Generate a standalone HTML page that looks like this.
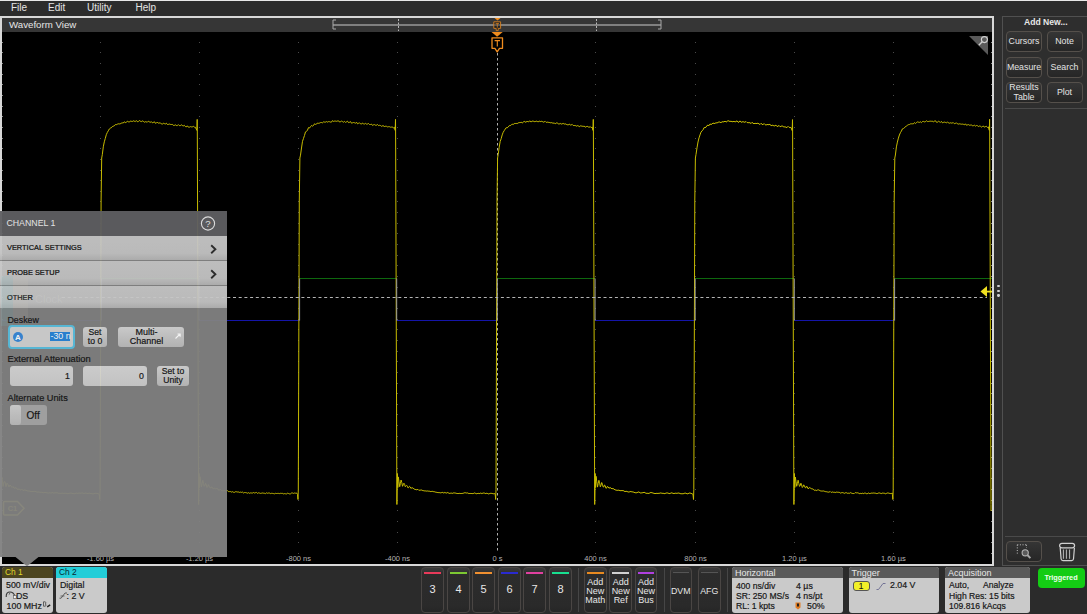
<!DOCTYPE html>
<html><head><meta charset="utf-8">
<style>
*{margin:0;padding:0;box-sizing:border-box}
html,body{width:1087px;height:614px;overflow:hidden;background:#2b2b2b;font-family:"Liberation Sans", sans-serif;}
.a{position:absolute}
.t{position:absolute;white-space:nowrap;line-height:1}
.k{-webkit-text-stroke:0.25px currentColor}
</style></head><body>
<div class="a" style="left:0;top:0;width:1087px;height:1px;background:#e8e8e8"></div><div class="a" style="left:0;top:1px;width:1087px;height:15px;background:#2c2c2c"></div><div class="t" style="left:11.0px;top:3px;font-size:10px;color:#e4e4e4">File</div><div class="t" style="left:48.0px;top:3px;font-size:10px;color:#e4e4e4">Edit</div><div class="t" style="left:87.0px;top:3px;font-size:10px;color:#e4e4e4">Utility</div><div class="t" style="left:135.5px;top:3px;font-size:10px;color:#e4e4e4">Help</div><div class="a" style="left:0;top:16px;width:994px;height:550px;background:#d8d8d8"></div><div class="a" style="left:2px;top:18px;width:990px;height:14px;background:#363636"></div><div class="t" style="left:9px;top:19.8px;font-size:9.7px;color:#e6e6e6">Waveform View</div><svg class="a" style="left:2px;top:32px" width="990" height="532" viewBox="2 32 990 532"><rect x="2" y="32" width="990" height="532" fill="#000"/><g fill="#4a4a4a"><rect x="100" y="42" width="1" height="1"/><rect x="100" y="52" width="1" height="1"/><rect x="100" y="63" width="1" height="1"/><rect x="100" y="74" width="1" height="1"/><rect x="100" y="84" width="1" height="1"/><rect x="100" y="95" width="1" height="1"/><rect x="100" y="106" width="1" height="1"/><rect x="100" y="116" width="1" height="1"/><rect x="100" y="127" width="1" height="1"/><rect x="100" y="138" width="1" height="1"/><rect x="100" y="148" width="1" height="1"/><rect x="100" y="159" width="1" height="1"/><rect x="100" y="170" width="1" height="1"/><rect x="100" y="180" width="1" height="1"/><rect x="100" y="191" width="1" height="1"/><rect x="100" y="201" width="1" height="1"/><rect x="100" y="212" width="1" height="1"/><rect x="100" y="223" width="1" height="1"/><rect x="100" y="233" width="1" height="1"/><rect x="100" y="244" width="1" height="1"/><rect x="100" y="255" width="1" height="1"/><rect x="100" y="265" width="1" height="1"/><rect x="100" y="276" width="1" height="1"/><rect x="100" y="287" width="1" height="1"/><rect x="100" y="297" width="1" height="1"/><rect x="100" y="308" width="1" height="1"/><rect x="100" y="319" width="1" height="1"/><rect x="100" y="329" width="1" height="1"/><rect x="100" y="340" width="1" height="1"/><rect x="100" y="351" width="1" height="1"/><rect x="100" y="361" width="1" height="1"/><rect x="100" y="372" width="1" height="1"/><rect x="100" y="383" width="1" height="1"/><rect x="100" y="393" width="1" height="1"/><rect x="100" y="404" width="1" height="1"/><rect x="100" y="414" width="1" height="1"/><rect x="100" y="425" width="1" height="1"/><rect x="100" y="436" width="1" height="1"/><rect x="100" y="446" width="1" height="1"/><rect x="100" y="457" width="1" height="1"/><rect x="100" y="468" width="1" height="1"/><rect x="100" y="478" width="1" height="1"/><rect x="100" y="489" width="1" height="1"/><rect x="100" y="500" width="1" height="1"/><rect x="100" y="510" width="1" height="1"/><rect x="100" y="521" width="1" height="1"/><rect x="100" y="532" width="1" height="1"/><rect x="100" y="542" width="1" height="1"/><rect x="100" y="553" width="1" height="1"/><rect x="199" y="42" width="1" height="1"/><rect x="199" y="52" width="1" height="1"/><rect x="199" y="63" width="1" height="1"/><rect x="199" y="74" width="1" height="1"/><rect x="199" y="84" width="1" height="1"/><rect x="199" y="95" width="1" height="1"/><rect x="199" y="106" width="1" height="1"/><rect x="199" y="116" width="1" height="1"/><rect x="199" y="127" width="1" height="1"/><rect x="199" y="138" width="1" height="1"/><rect x="199" y="148" width="1" height="1"/><rect x="199" y="159" width="1" height="1"/><rect x="199" y="170" width="1" height="1"/><rect x="199" y="180" width="1" height="1"/><rect x="199" y="191" width="1" height="1"/><rect x="199" y="201" width="1" height="1"/><rect x="199" y="212" width="1" height="1"/><rect x="199" y="223" width="1" height="1"/><rect x="199" y="233" width="1" height="1"/><rect x="199" y="244" width="1" height="1"/><rect x="199" y="255" width="1" height="1"/><rect x="199" y="265" width="1" height="1"/><rect x="199" y="276" width="1" height="1"/><rect x="199" y="287" width="1" height="1"/><rect x="199" y="297" width="1" height="1"/><rect x="199" y="308" width="1" height="1"/><rect x="199" y="319" width="1" height="1"/><rect x="199" y="329" width="1" height="1"/><rect x="199" y="340" width="1" height="1"/><rect x="199" y="351" width="1" height="1"/><rect x="199" y="361" width="1" height="1"/><rect x="199" y="372" width="1" height="1"/><rect x="199" y="383" width="1" height="1"/><rect x="199" y="393" width="1" height="1"/><rect x="199" y="404" width="1" height="1"/><rect x="199" y="414" width="1" height="1"/><rect x="199" y="425" width="1" height="1"/><rect x="199" y="436" width="1" height="1"/><rect x="199" y="446" width="1" height="1"/><rect x="199" y="457" width="1" height="1"/><rect x="199" y="468" width="1" height="1"/><rect x="199" y="478" width="1" height="1"/><rect x="199" y="489" width="1" height="1"/><rect x="199" y="500" width="1" height="1"/><rect x="199" y="510" width="1" height="1"/><rect x="199" y="521" width="1" height="1"/><rect x="199" y="532" width="1" height="1"/><rect x="199" y="542" width="1" height="1"/><rect x="199" y="553" width="1" height="1"/><rect x="298" y="42" width="1" height="1"/><rect x="298" y="52" width="1" height="1"/><rect x="298" y="63" width="1" height="1"/><rect x="298" y="74" width="1" height="1"/><rect x="298" y="84" width="1" height="1"/><rect x="298" y="95" width="1" height="1"/><rect x="298" y="106" width="1" height="1"/><rect x="298" y="116" width="1" height="1"/><rect x="298" y="127" width="1" height="1"/><rect x="298" y="138" width="1" height="1"/><rect x="298" y="148" width="1" height="1"/><rect x="298" y="159" width="1" height="1"/><rect x="298" y="170" width="1" height="1"/><rect x="298" y="180" width="1" height="1"/><rect x="298" y="191" width="1" height="1"/><rect x="298" y="201" width="1" height="1"/><rect x="298" y="212" width="1" height="1"/><rect x="298" y="223" width="1" height="1"/><rect x="298" y="233" width="1" height="1"/><rect x="298" y="244" width="1" height="1"/><rect x="298" y="255" width="1" height="1"/><rect x="298" y="265" width="1" height="1"/><rect x="298" y="276" width="1" height="1"/><rect x="298" y="287" width="1" height="1"/><rect x="298" y="297" width="1" height="1"/><rect x="298" y="308" width="1" height="1"/><rect x="298" y="319" width="1" height="1"/><rect x="298" y="329" width="1" height="1"/><rect x="298" y="340" width="1" height="1"/><rect x="298" y="351" width="1" height="1"/><rect x="298" y="361" width="1" height="1"/><rect x="298" y="372" width="1" height="1"/><rect x="298" y="383" width="1" height="1"/><rect x="298" y="393" width="1" height="1"/><rect x="298" y="404" width="1" height="1"/><rect x="298" y="414" width="1" height="1"/><rect x="298" y="425" width="1" height="1"/><rect x="298" y="436" width="1" height="1"/><rect x="298" y="446" width="1" height="1"/><rect x="298" y="457" width="1" height="1"/><rect x="298" y="468" width="1" height="1"/><rect x="298" y="478" width="1" height="1"/><rect x="298" y="489" width="1" height="1"/><rect x="298" y="500" width="1" height="1"/><rect x="298" y="510" width="1" height="1"/><rect x="298" y="521" width="1" height="1"/><rect x="298" y="532" width="1" height="1"/><rect x="298" y="542" width="1" height="1"/><rect x="298" y="553" width="1" height="1"/><rect x="397" y="42" width="1" height="1"/><rect x="397" y="52" width="1" height="1"/><rect x="397" y="63" width="1" height="1"/><rect x="397" y="74" width="1" height="1"/><rect x="397" y="84" width="1" height="1"/><rect x="397" y="95" width="1" height="1"/><rect x="397" y="106" width="1" height="1"/><rect x="397" y="116" width="1" height="1"/><rect x="397" y="127" width="1" height="1"/><rect x="397" y="138" width="1" height="1"/><rect x="397" y="148" width="1" height="1"/><rect x="397" y="159" width="1" height="1"/><rect x="397" y="170" width="1" height="1"/><rect x="397" y="180" width="1" height="1"/><rect x="397" y="191" width="1" height="1"/><rect x="397" y="201" width="1" height="1"/><rect x="397" y="212" width="1" height="1"/><rect x="397" y="223" width="1" height="1"/><rect x="397" y="233" width="1" height="1"/><rect x="397" y="244" width="1" height="1"/><rect x="397" y="255" width="1" height="1"/><rect x="397" y="265" width="1" height="1"/><rect x="397" y="276" width="1" height="1"/><rect x="397" y="287" width="1" height="1"/><rect x="397" y="297" width="1" height="1"/><rect x="397" y="308" width="1" height="1"/><rect x="397" y="319" width="1" height="1"/><rect x="397" y="329" width="1" height="1"/><rect x="397" y="340" width="1" height="1"/><rect x="397" y="351" width="1" height="1"/><rect x="397" y="361" width="1" height="1"/><rect x="397" y="372" width="1" height="1"/><rect x="397" y="383" width="1" height="1"/><rect x="397" y="393" width="1" height="1"/><rect x="397" y="404" width="1" height="1"/><rect x="397" y="414" width="1" height="1"/><rect x="397" y="425" width="1" height="1"/><rect x="397" y="436" width="1" height="1"/><rect x="397" y="446" width="1" height="1"/><rect x="397" y="457" width="1" height="1"/><rect x="397" y="468" width="1" height="1"/><rect x="397" y="478" width="1" height="1"/><rect x="397" y="489" width="1" height="1"/><rect x="397" y="500" width="1" height="1"/><rect x="397" y="510" width="1" height="1"/><rect x="397" y="521" width="1" height="1"/><rect x="397" y="532" width="1" height="1"/><rect x="397" y="542" width="1" height="1"/><rect x="397" y="553" width="1" height="1"/><rect x="595" y="42" width="1" height="1"/><rect x="595" y="52" width="1" height="1"/><rect x="595" y="63" width="1" height="1"/><rect x="595" y="74" width="1" height="1"/><rect x="595" y="84" width="1" height="1"/><rect x="595" y="95" width="1" height="1"/><rect x="595" y="106" width="1" height="1"/><rect x="595" y="116" width="1" height="1"/><rect x="595" y="127" width="1" height="1"/><rect x="595" y="138" width="1" height="1"/><rect x="595" y="148" width="1" height="1"/><rect x="595" y="159" width="1" height="1"/><rect x="595" y="170" width="1" height="1"/><rect x="595" y="180" width="1" height="1"/><rect x="595" y="191" width="1" height="1"/><rect x="595" y="201" width="1" height="1"/><rect x="595" y="212" width="1" height="1"/><rect x="595" y="223" width="1" height="1"/><rect x="595" y="233" width="1" height="1"/><rect x="595" y="244" width="1" height="1"/><rect x="595" y="255" width="1" height="1"/><rect x="595" y="265" width="1" height="1"/><rect x="595" y="276" width="1" height="1"/><rect x="595" y="287" width="1" height="1"/><rect x="595" y="297" width="1" height="1"/><rect x="595" y="308" width="1" height="1"/><rect x="595" y="319" width="1" height="1"/><rect x="595" y="329" width="1" height="1"/><rect x="595" y="340" width="1" height="1"/><rect x="595" y="351" width="1" height="1"/><rect x="595" y="361" width="1" height="1"/><rect x="595" y="372" width="1" height="1"/><rect x="595" y="383" width="1" height="1"/><rect x="595" y="393" width="1" height="1"/><rect x="595" y="404" width="1" height="1"/><rect x="595" y="414" width="1" height="1"/><rect x="595" y="425" width="1" height="1"/><rect x="595" y="436" width="1" height="1"/><rect x="595" y="446" width="1" height="1"/><rect x="595" y="457" width="1" height="1"/><rect x="595" y="468" width="1" height="1"/><rect x="595" y="478" width="1" height="1"/><rect x="595" y="489" width="1" height="1"/><rect x="595" y="500" width="1" height="1"/><rect x="595" y="510" width="1" height="1"/><rect x="595" y="521" width="1" height="1"/><rect x="595" y="532" width="1" height="1"/><rect x="595" y="542" width="1" height="1"/><rect x="595" y="553" width="1" height="1"/><rect x="695" y="42" width="1" height="1"/><rect x="695" y="52" width="1" height="1"/><rect x="695" y="63" width="1" height="1"/><rect x="695" y="74" width="1" height="1"/><rect x="695" y="84" width="1" height="1"/><rect x="695" y="95" width="1" height="1"/><rect x="695" y="106" width="1" height="1"/><rect x="695" y="116" width="1" height="1"/><rect x="695" y="127" width="1" height="1"/><rect x="695" y="138" width="1" height="1"/><rect x="695" y="148" width="1" height="1"/><rect x="695" y="159" width="1" height="1"/><rect x="695" y="170" width="1" height="1"/><rect x="695" y="180" width="1" height="1"/><rect x="695" y="191" width="1" height="1"/><rect x="695" y="201" width="1" height="1"/><rect x="695" y="212" width="1" height="1"/><rect x="695" y="223" width="1" height="1"/><rect x="695" y="233" width="1" height="1"/><rect x="695" y="244" width="1" height="1"/><rect x="695" y="255" width="1" height="1"/><rect x="695" y="265" width="1" height="1"/><rect x="695" y="276" width="1" height="1"/><rect x="695" y="287" width="1" height="1"/><rect x="695" y="297" width="1" height="1"/><rect x="695" y="308" width="1" height="1"/><rect x="695" y="319" width="1" height="1"/><rect x="695" y="329" width="1" height="1"/><rect x="695" y="340" width="1" height="1"/><rect x="695" y="351" width="1" height="1"/><rect x="695" y="361" width="1" height="1"/><rect x="695" y="372" width="1" height="1"/><rect x="695" y="383" width="1" height="1"/><rect x="695" y="393" width="1" height="1"/><rect x="695" y="404" width="1" height="1"/><rect x="695" y="414" width="1" height="1"/><rect x="695" y="425" width="1" height="1"/><rect x="695" y="436" width="1" height="1"/><rect x="695" y="446" width="1" height="1"/><rect x="695" y="457" width="1" height="1"/><rect x="695" y="468" width="1" height="1"/><rect x="695" y="478" width="1" height="1"/><rect x="695" y="489" width="1" height="1"/><rect x="695" y="500" width="1" height="1"/><rect x="695" y="510" width="1" height="1"/><rect x="695" y="521" width="1" height="1"/><rect x="695" y="532" width="1" height="1"/><rect x="695" y="542" width="1" height="1"/><rect x="695" y="553" width="1" height="1"/><rect x="794" y="42" width="1" height="1"/><rect x="794" y="52" width="1" height="1"/><rect x="794" y="63" width="1" height="1"/><rect x="794" y="74" width="1" height="1"/><rect x="794" y="84" width="1" height="1"/><rect x="794" y="95" width="1" height="1"/><rect x="794" y="106" width="1" height="1"/><rect x="794" y="116" width="1" height="1"/><rect x="794" y="127" width="1" height="1"/><rect x="794" y="138" width="1" height="1"/><rect x="794" y="148" width="1" height="1"/><rect x="794" y="159" width="1" height="1"/><rect x="794" y="170" width="1" height="1"/><rect x="794" y="180" width="1" height="1"/><rect x="794" y="191" width="1" height="1"/><rect x="794" y="201" width="1" height="1"/><rect x="794" y="212" width="1" height="1"/><rect x="794" y="223" width="1" height="1"/><rect x="794" y="233" width="1" height="1"/><rect x="794" y="244" width="1" height="1"/><rect x="794" y="255" width="1" height="1"/><rect x="794" y="265" width="1" height="1"/><rect x="794" y="276" width="1" height="1"/><rect x="794" y="287" width="1" height="1"/><rect x="794" y="297" width="1" height="1"/><rect x="794" y="308" width="1" height="1"/><rect x="794" y="319" width="1" height="1"/><rect x="794" y="329" width="1" height="1"/><rect x="794" y="340" width="1" height="1"/><rect x="794" y="351" width="1" height="1"/><rect x="794" y="361" width="1" height="1"/><rect x="794" y="372" width="1" height="1"/><rect x="794" y="383" width="1" height="1"/><rect x="794" y="393" width="1" height="1"/><rect x="794" y="404" width="1" height="1"/><rect x="794" y="414" width="1" height="1"/><rect x="794" y="425" width="1" height="1"/><rect x="794" y="436" width="1" height="1"/><rect x="794" y="446" width="1" height="1"/><rect x="794" y="457" width="1" height="1"/><rect x="794" y="468" width="1" height="1"/><rect x="794" y="478" width="1" height="1"/><rect x="794" y="489" width="1" height="1"/><rect x="794" y="500" width="1" height="1"/><rect x="794" y="510" width="1" height="1"/><rect x="794" y="521" width="1" height="1"/><rect x="794" y="532" width="1" height="1"/><rect x="794" y="542" width="1" height="1"/><rect x="794" y="553" width="1" height="1"/><rect x="893" y="42" width="1" height="1"/><rect x="893" y="52" width="1" height="1"/><rect x="893" y="63" width="1" height="1"/><rect x="893" y="74" width="1" height="1"/><rect x="893" y="84" width="1" height="1"/><rect x="893" y="95" width="1" height="1"/><rect x="893" y="106" width="1" height="1"/><rect x="893" y="116" width="1" height="1"/><rect x="893" y="127" width="1" height="1"/><rect x="893" y="138" width="1" height="1"/><rect x="893" y="148" width="1" height="1"/><rect x="893" y="159" width="1" height="1"/><rect x="893" y="170" width="1" height="1"/><rect x="893" y="180" width="1" height="1"/><rect x="893" y="191" width="1" height="1"/><rect x="893" y="201" width="1" height="1"/><rect x="893" y="212" width="1" height="1"/><rect x="893" y="223" width="1" height="1"/><rect x="893" y="233" width="1" height="1"/><rect x="893" y="244" width="1" height="1"/><rect x="893" y="255" width="1" height="1"/><rect x="893" y="265" width="1" height="1"/><rect x="893" y="276" width="1" height="1"/><rect x="893" y="287" width="1" height="1"/><rect x="893" y="297" width="1" height="1"/><rect x="893" y="308" width="1" height="1"/><rect x="893" y="319" width="1" height="1"/><rect x="893" y="329" width="1" height="1"/><rect x="893" y="340" width="1" height="1"/><rect x="893" y="351" width="1" height="1"/><rect x="893" y="361" width="1" height="1"/><rect x="893" y="372" width="1" height="1"/><rect x="893" y="383" width="1" height="1"/><rect x="893" y="393" width="1" height="1"/><rect x="893" y="404" width="1" height="1"/><rect x="893" y="414" width="1" height="1"/><rect x="893" y="425" width="1" height="1"/><rect x="893" y="436" width="1" height="1"/><rect x="893" y="446" width="1" height="1"/><rect x="893" y="457" width="1" height="1"/><rect x="893" y="468" width="1" height="1"/><rect x="893" y="478" width="1" height="1"/><rect x="893" y="489" width="1" height="1"/><rect x="893" y="500" width="1" height="1"/><rect x="893" y="510" width="1" height="1"/><rect x="893" y="521" width="1" height="1"/><rect x="893" y="532" width="1" height="1"/><rect x="893" y="542" width="1" height="1"/><rect x="893" y="553" width="1" height="1"/><rect x="2" y="42" width="1" height="1" fill="#8a8a8a"/><rect x="991" y="42" width="1" height="1" fill="#8a8a8a"/><rect x="2" y="52" width="1" height="1" fill="#8a8a8a"/><rect x="991" y="52" width="1" height="1" fill="#8a8a8a"/><rect x="2" y="63" width="1" height="1" fill="#8a8a8a"/><rect x="991" y="63" width="1" height="1" fill="#8a8a8a"/><rect x="2" y="74" width="1" height="1" fill="#8a8a8a"/><rect x="991" y="74" width="1" height="1" fill="#8a8a8a"/><rect x="2" y="84" width="1" height="1" fill="#8a8a8a"/><rect x="991" y="84" width="1" height="1" fill="#8a8a8a"/><rect x="2" y="95" width="1" height="1" fill="#8a8a8a"/><rect x="991" y="95" width="1" height="1" fill="#8a8a8a"/><rect x="2" y="106" width="1" height="1" fill="#8a8a8a"/><rect x="991" y="106" width="1" height="1" fill="#8a8a8a"/><rect x="2" y="116" width="1" height="1" fill="#8a8a8a"/><rect x="991" y="116" width="1" height="1" fill="#8a8a8a"/><rect x="2" y="127" width="1" height="1" fill="#8a8a8a"/><rect x="991" y="127" width="1" height="1" fill="#8a8a8a"/><rect x="2" y="138" width="1" height="1" fill="#8a8a8a"/><rect x="991" y="138" width="1" height="1" fill="#8a8a8a"/><rect x="2" y="148" width="1" height="1" fill="#8a8a8a"/><rect x="991" y="148" width="1" height="1" fill="#8a8a8a"/><rect x="2" y="159" width="1" height="1" fill="#8a8a8a"/><rect x="991" y="159" width="1" height="1" fill="#8a8a8a"/><rect x="2" y="170" width="1" height="1" fill="#8a8a8a"/><rect x="991" y="170" width="1" height="1" fill="#8a8a8a"/><rect x="2" y="180" width="1" height="1" fill="#8a8a8a"/><rect x="991" y="180" width="1" height="1" fill="#8a8a8a"/><rect x="2" y="191" width="1" height="1" fill="#8a8a8a"/><rect x="991" y="191" width="1" height="1" fill="#8a8a8a"/><rect x="2" y="201" width="1" height="1" fill="#8a8a8a"/><rect x="991" y="201" width="1" height="1" fill="#8a8a8a"/><rect x="2" y="212" width="1" height="1" fill="#8a8a8a"/><rect x="991" y="212" width="1" height="1" fill="#8a8a8a"/><rect x="2" y="223" width="1" height="1" fill="#8a8a8a"/><rect x="991" y="223" width="1" height="1" fill="#8a8a8a"/><rect x="2" y="233" width="1" height="1" fill="#8a8a8a"/><rect x="991" y="233" width="1" height="1" fill="#8a8a8a"/><rect x="2" y="244" width="1" height="1" fill="#8a8a8a"/><rect x="991" y="244" width="1" height="1" fill="#8a8a8a"/><rect x="2" y="255" width="1" height="1" fill="#8a8a8a"/><rect x="991" y="255" width="1" height="1" fill="#8a8a8a"/><rect x="2" y="265" width="1" height="1" fill="#8a8a8a"/><rect x="991" y="265" width="1" height="1" fill="#8a8a8a"/><rect x="2" y="276" width="1" height="1" fill="#8a8a8a"/><rect x="991" y="276" width="1" height="1" fill="#8a8a8a"/><rect x="2" y="287" width="1" height="1" fill="#8a8a8a"/><rect x="991" y="287" width="1" height="1" fill="#8a8a8a"/><rect x="2" y="297" width="1" height="1" fill="#8a8a8a"/><rect x="991" y="297" width="1" height="1" fill="#8a8a8a"/><rect x="2" y="308" width="1" height="1" fill="#8a8a8a"/><rect x="991" y="308" width="1" height="1" fill="#8a8a8a"/><rect x="2" y="319" width="1" height="1" fill="#8a8a8a"/><rect x="991" y="319" width="1" height="1" fill="#8a8a8a"/><rect x="2" y="329" width="1" height="1" fill="#8a8a8a"/><rect x="991" y="329" width="1" height="1" fill="#8a8a8a"/><rect x="2" y="340" width="1" height="1" fill="#8a8a8a"/><rect x="991" y="340" width="1" height="1" fill="#8a8a8a"/><rect x="2" y="351" width="1" height="1" fill="#8a8a8a"/><rect x="991" y="351" width="1" height="1" fill="#8a8a8a"/><rect x="2" y="361" width="1" height="1" fill="#8a8a8a"/><rect x="991" y="361" width="1" height="1" fill="#8a8a8a"/><rect x="2" y="372" width="1" height="1" fill="#8a8a8a"/><rect x="991" y="372" width="1" height="1" fill="#8a8a8a"/><rect x="2" y="383" width="1" height="1" fill="#8a8a8a"/><rect x="991" y="383" width="1" height="1" fill="#8a8a8a"/><rect x="2" y="393" width="1" height="1" fill="#8a8a8a"/><rect x="991" y="393" width="1" height="1" fill="#8a8a8a"/><rect x="2" y="404" width="1" height="1" fill="#8a8a8a"/><rect x="991" y="404" width="1" height="1" fill="#8a8a8a"/><rect x="2" y="414" width="1" height="1" fill="#8a8a8a"/><rect x="991" y="414" width="1" height="1" fill="#8a8a8a"/><rect x="2" y="425" width="1" height="1" fill="#8a8a8a"/><rect x="991" y="425" width="1" height="1" fill="#8a8a8a"/><rect x="2" y="436" width="1" height="1" fill="#8a8a8a"/><rect x="991" y="436" width="1" height="1" fill="#8a8a8a"/><rect x="2" y="446" width="1" height="1" fill="#8a8a8a"/><rect x="991" y="446" width="1" height="1" fill="#8a8a8a"/><rect x="2" y="457" width="1" height="1" fill="#8a8a8a"/><rect x="991" y="457" width="1" height="1" fill="#8a8a8a"/><rect x="2" y="468" width="1" height="1" fill="#8a8a8a"/><rect x="991" y="468" width="1" height="1" fill="#8a8a8a"/><rect x="2" y="478" width="1" height="1" fill="#8a8a8a"/><rect x="991" y="478" width="1" height="1" fill="#8a8a8a"/><rect x="2" y="489" width="1" height="1" fill="#8a8a8a"/><rect x="991" y="489" width="1" height="1" fill="#8a8a8a"/><rect x="2" y="500" width="1" height="1" fill="#8a8a8a"/><rect x="991" y="500" width="1" height="1" fill="#8a8a8a"/><rect x="2" y="510" width="1" height="1" fill="#8a8a8a"/><rect x="991" y="510" width="1" height="1" fill="#8a8a8a"/><rect x="2" y="521" width="1" height="1" fill="#8a8a8a"/><rect x="991" y="521" width="1" height="1" fill="#8a8a8a"/><rect x="2" y="532" width="1" height="1" fill="#8a8a8a"/><rect x="991" y="532" width="1" height="1" fill="#8a8a8a"/><rect x="2" y="542" width="1" height="1" fill="#8a8a8a"/><rect x="991" y="542" width="1" height="1" fill="#8a8a8a"/><rect x="2" y="553" width="1" height="1" fill="#8a8a8a"/><rect x="991" y="553" width="1" height="1" fill="#8a8a8a"/></g><line x1="497.5" y1="53" x2="497.5" y2="552" stroke="#b0b0b0" stroke-width="1" stroke-dasharray="2.5,2.5"/><text x="100.5" y="561" font-size="7.5" fill="#b4b4b4" text-anchor="middle" font-family="Liberation Sans">-1.60 µs</text><text x="199.5" y="561" font-size="7.5" fill="#b4b4b4" text-anchor="middle" font-family="Liberation Sans">-1.20 µs</text><text x="298.5" y="561" font-size="7.5" fill="#b4b4b4" text-anchor="middle" font-family="Liberation Sans">-800 ns</text><text x="397.5" y="561" font-size="7.5" fill="#b4b4b4" text-anchor="middle" font-family="Liberation Sans">-400 ns</text><text x="497.5" y="561" font-size="7.5" fill="#b4b4b4" text-anchor="middle" font-family="Liberation Sans">0 s</text><text x="595.5" y="561" font-size="7.5" fill="#b4b4b4" text-anchor="middle" font-family="Liberation Sans">400 ns</text><text x="695.5" y="561" font-size="7.5" fill="#b4b4b4" text-anchor="middle" font-family="Liberation Sans">800 ns</text><text x="794.5" y="561" font-size="7.5" fill="#b4b4b4" text-anchor="middle" font-family="Liberation Sans">1.20 µs</text><text x="893.5" y="561" font-size="7.5" fill="#b4b4b4" text-anchor="middle" font-family="Liberation Sans">1.60 µs</text><line x1="2.0" y1="320.5" x2="101.5" y2="320.5" stroke="#1414a8" stroke-width="1.2"/><line x1="101.5" y1="278.5" x2="198.9" y2="278.5" stroke="#0e680e" stroke-width="1.2"/><line x1="198.9" y1="320.5" x2="299.6" y2="320.5" stroke="#1414a8" stroke-width="1.2"/><line x1="299.6" y1="278.5" x2="396.7" y2="278.5" stroke="#0e680e" stroke-width="1.2"/><line x1="396.7" y1="320.5" x2="497.3" y2="320.5" stroke="#1414a8" stroke-width="1.2"/><line x1="497.3" y1="278.5" x2="595.1" y2="278.5" stroke="#0e680e" stroke-width="1.2"/><line x1="595.1" y1="320.5" x2="695.2" y2="320.5" stroke="#1414a8" stroke-width="1.2"/><line x1="695.2" y1="278.5" x2="794.3" y2="278.5" stroke="#0e680e" stroke-width="1.2"/><line x1="794.3" y1="320.5" x2="894.6" y2="320.5" stroke="#1414a8" stroke-width="1.2"/><line x1="894.6" y1="278.5" x2="992" y2="278.5" stroke="#0e680e" stroke-width="1.2"/><path d="M4.5,501.5 h13 l6.5,6.8 l-6.5,6.8 h-13 q-1,0 -1,-1 v-11.6 q0,-1 1,-1 z" fill="none" stroke="#e8dc20" stroke-width="1.5"/><text x="12.5" y="511" font-size="7.5" fill="#e8dc20" text-anchor="middle" font-family="Liberation Sans" font-weight="bold">C1</text><polyline points="1.0,481.2 2.0,477.3 3.0,486.5 4.0,481.8 5.0,481.8 6.0,486.7 7.0,483.1 8.0,484.6 9.0,486.9 10.0,485.0 11.0,486.1 12.0,487.5 13.0,486.5 14.0,488.2 15.0,488.1 16.0,487.5 17.0,489.0 18.0,489.5 19.0,488.9 20.0,489.6 21.0,490.2 22.0,489.2 23.0,490.6 24.0,490.0 25.0,490.0 26.0,490.4 27.0,490.6 28.0,491.2 29.0,490.9 30.0,491.3 31.0,491.5 32.0,491.4 33.0,491.6 34.0,491.3 35.0,491.4 36.0,491.6 37.0,492.2 38.0,492.0 39.0,492.0 40.0,492.3 41.0,492.3 42.0,492.2 43.0,492.8 44.0,492.7 45.0,492.3 46.0,492.7 47.0,492.7 48.0,493.1 49.0,493.0 50.0,492.6 51.0,493.3 52.0,492.5 53.0,492.8 54.0,493.2 55.0,492.6 56.0,493.0 57.0,492.6 58.0,493.2 59.0,493.4 60.0,493.2 61.0,493.5 62.0,493.0 63.0,493.4 64.0,493.3 65.0,493.3 66.0,493.2 67.0,493.6 68.0,493.7 69.0,493.2 70.0,493.4 71.0,492.9 72.0,493.5 73.0,493.5 74.0,493.8 75.0,493.7 76.0,493.1 77.0,493.2 78.0,493.5 79.0,492.9 80.0,493.3 81.0,493.1 82.0,493.0 83.0,493.0 84.0,493.7 85.0,493.0 86.0,493.2 87.0,493.3 88.0,493.8 89.0,493.0 90.0,493.4 91.0,493.5 92.0,493.8 93.0,493.8 94.0,493.8 95.0,493.2 96.0,493.4 97.0,493.3 98.0,493.8 99.0,493.9 99.3,494.5 99.8,499.5 100.1,489.5 101.1,200.0 101.7,158.0 102.3,154.7 103.3,146.8 104.3,141.8 105.3,138.4 106.3,134.7 107.3,132.5 108.3,130.8 109.3,129.0 110.3,128.2 111.3,127.8 112.3,126.6 113.3,126.2 114.3,125.8 115.3,124.6 116.3,124.7 117.3,124.2 118.3,123.8 119.3,123.9 120.3,124.0 121.3,123.0 122.3,122.9 123.3,123.0 124.3,121.8 125.3,122.6 126.3,122.2 127.3,121.3 128.3,121.8 129.3,121.9 130.3,121.2 131.3,121.3 132.3,121.5 133.3,120.8 134.3,121.2 135.3,121.6 136.3,120.5 137.3,121.7 138.3,121.6 139.3,120.5 140.3,121.2 141.3,121.6 142.3,120.9 143.3,121.3 144.3,122.2 145.3,121.7 146.3,121.9 147.3,122.2 148.3,121.2 149.3,121.8 150.3,122.3 151.3,121.6 152.3,122.8 153.3,122.5 154.3,121.7 155.3,123.2 156.3,123.1 157.3,122.1 158.3,123.2 159.3,123.0 160.3,122.8 161.3,123.9 162.3,124.1 163.3,123.3 164.3,123.6 165.3,124.0 166.3,123.2 167.3,124.4 168.3,124.4 169.3,124.0 170.3,124.4 171.3,124.5 172.3,124.4 173.3,125.3 174.3,125.4 175.3,124.8 176.3,125.5 177.3,125.6 178.3,124.6 179.3,125.6 180.3,125.6 181.3,124.8 182.3,125.5 183.3,125.9 184.3,125.3 185.3,126.5 186.3,126.9 187.3,125.8 188.3,127.1 189.3,127.2 190.3,126.6 191.3,126.9 192.3,126.9 193.3,126.3 194.3,127.1 195.3,127.2 196.9,130.4 197.2,119.4 197.3,129.4 198.6,504.5 199.1,473.5 199.5,487.5 200.0,476.7 200.7,481.9 201.4,486.9 202.1,483.6 202.8,480.3 203.5,483.4 204.2,486.3 204.9,485.5 205.6,483.3 206.3,484.9 207.0,487.5 207.7,486.5 208.4,484.6 209.1,486.2 209.8,487.6 210.5,487.9 211.2,487.1 211.9,487.0 212.6,488.3 213.6,488.6 214.6,488.3 215.6,488.8 216.6,488.5 217.6,488.7 218.6,490.2 219.6,489.9 220.6,489.5 221.6,490.7 222.6,490.7 223.6,490.7 224.6,490.6 225.6,490.8 226.6,490.6 227.6,490.7 228.6,491.7 229.6,491.6 230.6,491.6 231.6,492.1 232.6,491.7 233.6,492.3 234.6,492.3 235.6,491.7 236.6,491.8 237.6,492.0 238.6,492.0 239.6,492.4 240.6,492.1 241.6,492.4 242.6,492.1 243.6,493.0 244.6,492.5 245.6,492.6 246.6,492.8 247.6,493.2 248.6,492.7 249.6,493.3 250.6,492.9 251.6,493.0 252.6,493.0 253.6,492.5 254.6,493.0 255.6,492.7 256.6,492.5 257.6,493.4 258.6,492.8 259.6,493.1 260.6,493.4 261.6,493.2 262.6,493.0 263.6,493.2 264.6,493.3 265.6,493.6 266.6,492.8 267.6,493.3 268.6,493.0 269.6,493.1 270.6,493.6 271.6,493.3 272.6,493.4 273.6,493.6 274.6,493.8 275.6,493.3 276.6,493.5 277.6,493.4 278.6,493.4 279.6,493.6 280.6,493.3 281.6,493.4 282.6,493.4 283.6,493.9 284.6,493.6 285.6,493.8 286.6,493.9 287.6,493.2 288.6,493.5 289.6,493.9 290.6,493.8 291.6,493.0 292.6,493.0 293.6,493.4 294.6,493.0 295.6,493.2 296.6,493.0 297.5,494.5 298.0,499.5 298.3,489.5 299.3,200.0 299.9,158.0 300.5,155.1 301.5,148.0 302.5,141.3 303.5,138.4 304.5,135.4 305.5,131.9 306.5,131.4 307.5,130.1 308.5,127.6 309.5,128.0 310.5,126.7 311.5,125.5 312.5,126.1 313.5,125.5 314.5,123.8 315.5,124.4 316.5,124.1 317.5,123.0 318.5,123.3 319.5,123.1 320.5,122.6 321.5,122.5 322.5,122.8 323.5,121.9 324.5,122.1 325.5,122.1 326.5,121.6 327.5,122.1 328.5,121.6 329.5,121.7 330.5,122.1 331.5,122.1 332.5,120.6 333.5,121.4 334.5,121.1 335.5,121.1 336.5,121.3 337.5,121.0 338.5,120.8 339.5,122.0 340.5,121.9 341.5,120.9 342.5,121.6 343.5,122.2 344.5,121.4 345.5,122.4 346.5,121.8 347.5,121.2 348.5,122.6 349.5,122.3 350.5,121.6 351.5,123.2 352.5,122.8 353.5,122.5 354.5,122.7 355.5,123.3 356.5,122.2 357.5,123.8 358.5,123.3 359.5,122.8 360.5,123.8 361.5,124.1 362.5,123.0 363.5,123.8 364.5,124.0 365.5,123.4 366.5,124.1 367.5,124.0 368.5,123.5 369.5,124.5 370.5,124.5 371.5,124.1 372.5,125.4 373.5,124.8 374.5,124.6 375.5,125.2 376.5,125.2 377.5,124.5 378.5,125.6 379.5,125.3 380.5,125.5 381.5,126.3 382.5,125.8 383.5,125.7 384.5,127.0 385.5,126.0 386.5,126.3 387.5,126.9 388.5,126.7 389.5,126.7 390.5,127.2 391.5,127.1 392.5,126.9 393.5,128.1 394.5,127.3 395.2,130.4 395.5,119.4 395.6,129.4 396.9,504.5 397.4,473.5 397.8,487.5 398.3,476.9 399.0,481.7 399.7,486.7 400.4,483.5 401.1,480.0 401.8,482.6 402.5,486.3 403.2,484.8 403.9,483.2 404.6,484.3 405.3,486.8 406.0,486.1 406.7,485.4 407.4,486.3 408.1,488.0 408.8,487.4 409.5,486.3 410.2,486.9 410.9,488.4 411.9,487.8 412.9,487.9 413.9,488.9 414.9,489.4 415.9,489.6 416.9,489.8 417.9,489.3 418.9,490.4 419.9,490.1 420.9,490.1 421.9,490.0 422.9,490.7 423.9,490.7 424.9,491.0 425.9,490.9 426.9,491.2 427.9,490.9 428.9,491.3 429.9,491.2 430.9,491.7 431.9,491.3 432.9,491.4 433.9,491.8 434.9,491.8 435.9,492.3 436.9,492.3 437.9,492.6 438.9,492.6 439.9,492.7 440.9,492.9 441.9,492.5 442.9,492.4 443.9,493.2 444.9,492.3 445.9,493.0 446.9,493.0 447.9,492.4 448.9,493.3 449.9,493.4 450.9,493.1 451.9,493.2 452.9,493.4 453.9,492.7 454.9,493.1 455.9,493.1 456.9,493.5 457.9,493.5 458.9,493.5 459.9,493.3 460.9,493.6 461.9,493.4 462.9,493.4 463.9,493.0 464.9,492.7 465.9,492.9 466.9,493.1 467.9,492.9 468.9,493.7 469.9,493.4 470.9,493.5 471.9,493.5 472.9,493.6 473.9,493.3 474.9,492.8 475.9,493.7 476.9,493.7 477.9,493.4 478.9,493.4 479.9,493.6 480.9,492.9 481.9,493.7 482.9,493.1 483.9,493.0 484.9,493.2 485.9,493.7 486.9,493.1 487.9,493.7 488.9,494.0 489.9,493.4 490.9,493.3 491.9,493.4 492.9,493.7 493.9,493.8 494.9,493.6 495.2,494.5 495.7,499.5 496.0,489.5 497.0,200.0 497.6,158.0 498.2,154.5 499.2,147.2 500.2,141.4 501.2,138.6 502.2,134.9 503.2,132.3 504.2,130.7 505.2,129.1 506.2,127.7 507.2,127.9 508.2,126.9 509.2,125.7 510.2,125.6 511.2,125.1 512.2,124.1 513.2,124.5 514.2,123.6 515.2,123.5 516.2,123.4 517.2,123.6 518.2,122.9 519.2,122.6 520.2,122.6 521.2,122.2 522.2,123.0 523.2,122.1 524.2,121.4 525.2,122.0 526.2,122.2 527.2,121.0 528.2,122.0 529.2,121.2 530.2,121.0 531.2,122.1 532.2,121.0 533.2,121.1 534.2,121.6 535.2,121.6 536.2,121.1 537.2,121.5 538.2,121.8 539.2,121.1 540.2,121.6 541.2,121.3 542.2,121.4 543.2,122.2 544.2,121.8 545.2,121.4 546.2,122.4 547.2,122.1 548.2,122.3 549.2,122.4 550.2,122.8 551.2,122.6 552.2,122.9 553.2,123.3 554.2,122.8 555.2,123.9 556.2,123.0 557.2,122.9 558.2,123.8 559.2,124.0 560.2,123.4 561.2,124.1 562.2,123.8 563.2,123.4 564.2,124.1 565.2,123.8 566.2,124.3 567.2,124.7 568.2,124.9 569.2,124.1 570.2,125.0 571.2,124.9 572.2,124.4 573.2,125.5 574.2,125.6 575.2,125.4 576.2,126.2 577.2,125.7 578.2,125.8 579.2,126.7 580.2,125.9 581.2,126.0 582.2,126.2 583.2,126.4 584.2,126.1 585.2,127.2 586.2,126.7 587.2,126.3 588.2,126.9 589.2,127.3 590.2,126.5 591.2,127.7 592.2,127.1 593.0,130.4 593.3,119.4 593.4,129.4 594.7,504.5 595.2,473.5 595.6,487.5 596.1,476.3 596.8,481.8 597.5,487.1 598.2,483.4 598.9,480.3 599.6,482.8 600.3,486.8 601.0,485.2 601.7,482.5 602.4,484.2 603.1,486.9 603.8,487.0 604.5,485.0 605.2,485.6 605.9,488.2 606.6,488.1 607.3,486.5 608.0,486.7 609.0,488.3 610.0,487.4 611.0,488.2 612.0,488.8 613.0,488.5 614.0,489.1 615.0,489.9 616.0,490.0 617.0,490.4 618.0,490.2 619.0,490.2 620.0,490.7 621.0,490.6 622.0,490.6 623.0,490.6 624.0,490.9 625.0,491.8 626.0,491.1 627.0,491.6 628.0,491.8 629.0,492.2 630.0,491.5 631.0,491.7 632.0,491.8 633.0,492.0 634.0,492.2 635.0,492.8 636.0,492.7 637.0,492.8 638.0,492.0 639.0,492.0 640.0,492.8 641.0,493.1 642.0,492.7 643.0,492.8 644.0,492.2 645.0,492.7 646.0,493.3 647.0,493.3 648.0,493.3 649.0,493.5 650.0,492.7 651.0,492.6 652.0,492.7 653.0,493.1 654.0,493.3 655.0,493.6 656.0,493.4 657.0,493.3 658.0,493.5 659.0,493.2 660.0,493.3 661.0,492.7 662.0,493.6 663.0,493.0 664.0,493.7 665.0,493.5 666.0,493.1 667.0,492.9 668.0,493.1 669.0,493.5 670.0,493.6 671.0,492.9 672.0,492.9 673.0,493.4 674.0,493.5 675.0,493.3 676.0,493.1 677.0,493.5 678.0,492.9 679.0,493.2 680.0,493.4 681.0,493.9 682.0,493.6 683.0,493.9 684.0,493.4 685.0,493.1 686.0,493.2 687.0,493.9 688.0,493.7 689.0,493.2 690.0,492.9 691.0,493.5 692.0,493.6 693.0,494.5 693.5,499.5 693.8,489.5 694.8,200.0 695.4,158.0 696.0,154.4 697.0,147.9 698.0,142.0 699.0,137.9 700.0,134.9 701.0,132.1 702.0,130.9 703.0,129.9 704.0,127.6 705.0,127.7 706.0,127.2 707.0,125.5 708.0,125.2 709.0,125.7 710.0,123.9 711.0,124.6 712.0,124.0 713.0,122.9 714.0,123.7 715.0,123.2 716.0,122.9 717.0,122.8 718.0,122.6 719.0,121.7 720.0,122.3 721.0,122.6 722.0,121.9 723.0,121.7 724.0,122.0 725.0,121.0 726.0,122.1 727.0,121.5 728.0,120.6 729.0,121.1 730.0,121.5 731.0,121.2 732.0,121.7 733.0,121.7 734.0,121.3 735.0,121.9 736.0,121.6 737.0,120.8 738.0,122.2 739.0,122.2 740.0,120.9 741.0,122.2 742.0,122.1 743.0,121.5 744.0,122.2 745.0,122.2 746.0,121.5 747.0,122.5 748.0,122.7 749.0,122.7 750.0,122.7 751.0,123.6 752.0,122.3 753.0,123.2 754.0,123.8 755.0,123.2 756.0,123.6 757.0,123.4 758.0,123.2 759.0,123.9 760.0,124.5 761.0,123.3 762.0,124.2 763.0,124.8 764.0,123.5 765.0,124.6 766.0,125.1 767.0,124.5 768.0,124.6 769.0,124.7 770.0,124.2 771.0,125.8 772.0,125.3 773.0,125.2 774.0,126.1 775.0,125.7 776.0,125.1 777.0,126.5 778.0,126.3 779.0,125.4 780.0,126.7 781.0,126.4 782.0,125.8 783.0,126.4 784.0,127.1 785.0,126.7 786.0,127.3 787.0,127.6 788.0,126.3 789.0,127.3 790.0,127.5 791.0,127.5 792.2,130.6 792.5,119.6 792.6,129.6 793.9,504.5 794.4,473.5 794.8,487.5 795.3,477.0 796.0,481.4 796.7,486.3 797.4,483.6 798.1,480.2 798.8,483.5 799.5,486.4 800.2,485.6 800.9,483.2 801.6,484.9 802.3,487.5 803.0,486.7 803.7,484.8 804.4,485.7 805.1,487.6 805.8,487.9 806.5,486.1 807.2,486.8 808.2,488.9 809.2,487.6 810.2,487.9 811.2,488.7 812.2,488.8 813.2,489.2 814.2,490.3 815.2,490.0 816.2,490.6 817.2,490.1 818.2,489.8 819.2,490.2 820.2,490.8 821.2,491.0 822.2,491.1 823.2,490.9 824.2,491.2 825.2,491.6 826.2,491.7 827.2,491.9 828.2,492.2 829.2,492.0 830.2,491.5 831.2,492.5 832.2,491.9 833.2,492.3 834.2,492.2 835.2,492.6 836.2,492.1 837.2,492.2 838.2,492.3 839.2,492.2 840.2,493.1 841.2,492.8 842.2,492.6 843.2,492.7 844.2,493.4 845.2,492.9 846.2,492.6 847.2,493.3 848.2,493.1 849.2,493.5 850.2,492.6 851.2,493.0 852.2,493.4 853.2,493.5 854.2,493.6 855.2,492.6 856.2,492.9 857.2,492.8 858.2,492.9 859.2,493.7 860.2,493.3 861.2,493.7 862.2,493.1 863.2,493.7 864.2,493.2 865.2,493.0 866.2,493.6 867.2,493.8 868.2,492.9 869.2,493.5 870.2,493.5 871.2,493.1 872.2,493.2 873.2,493.0 874.2,493.1 875.2,493.1 876.2,493.5 877.2,493.6 878.2,493.1 879.2,492.9 880.2,493.2 881.2,493.6 882.2,493.1 883.2,493.2 884.2,493.1 885.2,493.8 886.2,493.5 887.2,493.0 888.2,493.0 889.2,493.3 890.2,493.5 891.2,493.6 892.2,493.0 892.4,494.5 892.9,499.5 893.2,489.5 894.2,200.0 894.8,158.0 895.4,155.0 896.4,146.9 897.4,142.1 898.4,138.1 899.4,135.0 900.4,132.7 901.4,131.1 902.4,128.9 903.4,128.5 904.4,127.9 905.4,126.6 906.4,126.1 907.4,125.3 908.4,124.7 909.4,124.5 910.4,123.9 911.4,123.8 912.4,123.8 913.4,123.8 914.4,122.6 915.4,123.5 916.4,122.8 917.4,121.8 918.4,122.2 919.4,122.4 920.4,121.8 921.4,122.6 922.4,121.6 923.4,121.4 924.4,121.9 925.4,121.7 926.4,120.7 927.4,121.5 928.4,121.5 929.4,121.3 930.4,121.2 931.4,121.3 932.4,121.0 933.4,122.0 934.4,121.2 935.4,120.7 936.4,122.2 937.4,122.2 938.4,121.3 939.4,121.7 940.4,122.4 941.4,121.4 942.4,122.8 943.4,122.4 944.4,122.1 945.4,122.4 946.4,122.8 947.4,121.9 948.4,122.9 949.4,123.2 950.4,122.8 951.4,123.1 952.4,122.9 953.4,122.7 954.4,123.7 955.4,123.4 956.4,122.8 957.4,123.8 958.4,124.1 959.4,123.8 960.4,124.0 961.4,124.2 962.4,124.1 963.4,124.3 964.4,124.8 965.4,123.8 966.4,125.2 967.4,124.9 968.4,124.6 969.4,125.2 970.4,125.1 971.4,125.0 972.4,125.7 973.4,125.7 974.4,125.2 975.4,126.1 976.4,125.5 977.4,125.7 978.4,126.5 979.4,126.0 980.4,126.2 981.4,127.1 982.4,126.5 983.4,126.0 984.4,127.2 985.4,126.6 986.4,126.3 987.4,127.5 988.4,126.9 989.3,130.3 989.6,119.3 989.7,129.3 991.0,504.5 991.0,511.0" fill="none" stroke="#c8bc00" stroke-width="1" stroke-linejoin="round"/><line x1="101.5" y1="278.5" x2="101.5" y2="320.5" stroke="#9a9a9a" stroke-width="1"/><line x1="198.9" y1="278.5" x2="198.9" y2="320.5" stroke="#9a9a9a" stroke-width="1"/><line x1="299.6" y1="278.5" x2="299.6" y2="320.5" stroke="#9a9a9a" stroke-width="1"/><line x1="396.7" y1="278.5" x2="396.7" y2="320.5" stroke="#9a9a9a" stroke-width="1"/><line x1="497.3" y1="278.5" x2="497.3" y2="320.5" stroke="#9a9a9a" stroke-width="1"/><line x1="595.1" y1="278.5" x2="595.1" y2="320.5" stroke="#9a9a9a" stroke-width="1"/><line x1="695.2" y1="278.5" x2="695.2" y2="320.5" stroke="#9a9a9a" stroke-width="1"/><line x1="794.3" y1="278.5" x2="794.3" y2="320.5" stroke="#9a9a9a" stroke-width="1"/><line x1="894.6" y1="278.5" x2="894.6" y2="320.5" stroke="#9a9a9a" stroke-width="1"/><line x1="62" y1="297.5" x2="987" y2="297.5" stroke="#b4b4b4" stroke-width="1" stroke-dasharray="3,2.7"/><path d="M980.5,291.5 L987,286 L987,297 Z" fill="#f0e020"/><rect x="986" y="290.7" width="6" height="1.8" fill="#f0e020"/><path d="M969,36 L988,36 L988,55 Z" fill="#5a5a5a"/><circle cx="984.4" cy="39.6" r="3" fill="none" stroke="#d0d0d0" stroke-width="1.1"/><line x1="982.2" y1="41.8" x2="978.8" y2="45.2" stroke="#d0d0d0" stroke-width="1.4"/><path d="M492,37.8 h10.5 v10.5 h-3 l-2.3,3.6 l-2.3,-3.6 h-2.9 z" fill="#000" stroke="#f08c1e" stroke-width="1.3" stroke-linejoin="round"/><path d="M494.6,40.6 h5.4 M497.3,40.6 v6" stroke="#f08c1e" stroke-width="1.1" fill="none"/><path d="M491.5,32 h11.2 l-5.6,4.8 z" fill="#f08c1e"/></svg><svg class="a" style="left:0;top:0" width="994" height="32"><line x1="333" y1="25" x2="661" y2="25" stroke="#9a9a9a" stroke-width="1.5"/><path d="M336,20 h-3 v9 h3" fill="none" stroke="#a8a8a8" stroke-width="1"/><path d="M658,20 h3 v9 h-3" fill="none" stroke="#a8a8a8" stroke-width="1"/><line x1="398.5" y1="19" x2="398.5" y2="31" stroke="#b8b8b8" stroke-width="1" stroke-dasharray="2,1.5"/><line x1="596.5" y1="19" x2="596.5" y2="31" stroke="#b8b8b8" stroke-width="1" stroke-dasharray="2,1.5"/><path d="M494.5,18 h6 l-3,2.5 z" fill="#f08c1e"/><path d="M493.8,21.8 h6.8 v6.6 h-2.4 v2.2 h-2 v-2.2 h-2.4 z" fill="rgba(0,0,0,0.35)" stroke="#d8801e" stroke-width="0.9"/><path d="M495.6,23.6 h3.4 M497.3,23.6 v4" stroke="#d8801e" stroke-width="0.8"/><path d="M492.5,31.5 h9 l-4.5,-0.1 z" fill="#f08c1e"/></svg><div class="a" style="left:994px;top:16px;width:8px;height:550px;background:#2e2e2e"></div><div class="a" style="left:997.3px;top:284.5px;width:2.3px;height:2.3px;border-radius:50%;background:#d0d0d0"></div><div class="a" style="left:997.3px;top:289.5px;width:2.3px;height:2.3px;border-radius:50%;background:#d0d0d0"></div><div class="a" style="left:997.3px;top:294.4px;width:2.3px;height:2.3px;border-radius:50%;background:#d0d0d0"></div><div class="a" style="left:1002px;top:16px;width:85px;height:550px;background:#2e2e2e;border-left:1px solid #505050;border-top:1px solid #505050;border-bottom:1px solid #505050"></div><div class="t" style="left:1024px;top:18px;font-size:8.6px;font-weight:bold;color:#e8e8e8">Add New...</div><div style="position:absolute;border:1px solid #55504b;border-radius:4px;background:linear-gradient(#353535,#262626);color:#e4e4e4;font-size:8.8px;text-align:center;display:flex;align-items:center;justify-content:center;line-height:1.05;left:1006.0px;top:31px;width:36px;height:21px">Cursors</div><div style="position:absolute;border:1px solid #55504b;border-radius:4px;background:linear-gradient(#353535,#262626);color:#e4e4e4;font-size:8.8px;text-align:center;display:flex;align-items:center;justify-content:center;line-height:1.05;left:1046.5px;top:31px;width:36px;height:21px">Note</div><div style="position:absolute;border:1px solid #55504b;border-radius:4px;background:linear-gradient(#353535,#262626);color:#e4e4e4;font-size:8.8px;text-align:center;display:flex;align-items:center;justify-content:center;line-height:1.05;left:1006.0px;top:57px;width:36px;height:21px">Measure</div><div style="position:absolute;border:1px solid #55504b;border-radius:4px;background:linear-gradient(#353535,#262626);color:#e4e4e4;font-size:8.8px;text-align:center;display:flex;align-items:center;justify-content:center;line-height:1.05;left:1046.5px;top:57px;width:36px;height:21px">Search</div><div style="position:absolute;border:1px solid #55504b;border-radius:4px;background:linear-gradient(#353535,#262626);color:#e4e4e4;font-size:8.8px;text-align:center;display:flex;align-items:center;justify-content:center;line-height:1.05;left:1006.0px;top:82px;width:36px;height:21px">Results<br>Table</div><div style="position:absolute;border:1px solid #55504b;border-radius:4px;background:linear-gradient(#353535,#262626);color:#e4e4e4;font-size:8.8px;text-align:center;display:flex;align-items:center;justify-content:center;line-height:1.05;left:1046.5px;top:82px;width:36px;height:21px">Plot</div><div class="a" style="left:1005px;top:108px;width:82px;height:1px;background:#4a4a4a"></div><div class="a" style="left:1005px;top:536px;width:82px;height:1px;background:#4a4a4a"></div><div style="position:absolute;border:1px solid #55504b;border-radius:4px;background:linear-gradient(#353535,#262626);color:#e4e4e4;font-size:8.8px;text-align:center;display:flex;align-items:center;justify-content:center;line-height:1.05;left:1006px;top:541px;width:36px;height:21px"></div><svg class="a" style="left:1006px;top:541px" width="36" height="21"><path d="M11.3,3.8 v9 M11.3,3.8 h9.2 M20.5,3.8 v3" fill="none" stroke="#bdbdbd" stroke-width="1" stroke-dasharray="1,1.6"/><circle cx="19.2" cy="11.8" r="3.1" fill="#5a5a5a" stroke="#b4b4b4" stroke-width="1.1"/><line x1="21.4" y1="14" x2="24.4" y2="17.2" stroke="#a8a8a8" stroke-width="1.9"/></svg><svg class="a" style="left:1052px;top:538px" width="28" height="28"><rect x="7.6" y="5.3" width="15" height="4.6" rx="2.3" fill="none" stroke="#d0d0d0" stroke-width="1.2"/><path d="M8.2,10 L9.1,21 Q9.3,22.6 11,22.6 H19.6 Q21.3,22.6 21.5,21 L22.4,10" fill="none" stroke="#d0d0d0" stroke-width="1.2"/><path d="M11.4,11.5 v9.3 M14.4,11.5 v9.3 M17.6,11.5 v9.3" stroke="#b8b8b8" stroke-width="1"/></svg><div class="a" style="left:0;top:566px;width:1087px;height:48px;background:#2b2b2b"></div><div class="a" style="left:0;top:564px;width:994px;height:2px;background:#d8d8d8"></div><div class="a" style="left:2.0px;top:567px;width:51.0px;height:46px;border-radius:3px;overflow:hidden;background:#cacaca"><div class="a" style="left:0;top:0;width:100%;height:10.5px;background:#4c4520"></div><div class="t" style="left:3px;top:1.3px;font-size:8.4px;color:#e0d828">Ch 1</div><div class="t" style="left:4px;top:14px;font-size:8.8px;color:#181818;-webkit-text-stroke:0.2px #181818">500 mV/div</div><svg class="a" style="left:3px;top:24px" width="12" height="8"><path d="M1.2,6 C1,2.5 2.5,1 5,1 C7.5,1 9,2.5 9.8,5" fill="none" stroke="#3a3a3a" stroke-width="1.1"/><path d="M3.8,3.5 L5.2,2.2" stroke="#3a3a3a" stroke-width="1"/><rect x="8.6" y="4.5" width="2.6" height="2.8" fill="#f4f4f4" stroke="#555" stroke-width="0.6"/></svg><div class="t" style="left:14px;top:24.5px;font-size:8.8px;color:#181818;-webkit-text-stroke:0.2px #181818">DS</div><div class="t" style="left:4.6px;top:35px;font-size:8.8px;color:#181818;-webkit-text-stroke:0.2px #181818">100 MHz</div><svg class="a" style="left:40px;top:34px" width="10" height="8"><path d="M1.5,0.8 v4.4 h1.6 c1.2,0 1.3,-2.2 0,-2.2 c1,0 1,-2.2 0,-2.2 z" fill="none" stroke="#444" stroke-width="0.8"/><path d="M4.8,5.2 L7.8,3.2 L8.6,4.5 L5.6,6.6 z" fill="#222"/></svg></div><div class="a" style="left:56.0px;top:567px;width:50.5px;height:46px;border-radius:3px;overflow:hidden;background:#cacaca"><div class="a" style="left:0;top:0;width:100%;height:10.5px;background:#22cdd8"></div><div class="t" style="left:3px;top:1.3px;font-size:8.4px;color:#062630">Ch 2</div><div class="t" style="left:4px;top:14px;font-size:8.8px;color:#181818;-webkit-text-stroke:0.2px #181818">Digital</div><svg class="a" style="left:3px;top:25px" width="9" height="7"><path d="M0.5,6.2 h1.6 L6,1 h2" fill="none" stroke="#505050" stroke-width="0.9"/><path d="M1.5,4 h4" stroke="#505050" stroke-width="0.8"/></svg><div class="t" style="left:10.5px;top:24.5px;font-size:8.8px;color:#181818;-webkit-text-stroke:0.2px #181818">: 2 V</div></div><div style="position:absolute;top:567px;height:46px;border:1px solid #4a4644;border-radius:4px;background:linear-gradient(#3a3a3a,#2c2c2c 14%,#2a2a2a 85%,#262626);color:#e8e8e8;text-align:center;left:421.0px;width:23px"><div class="a" style="left:2px;top:4px;width:17px;height:1.6px;background:#e83a5a"></div><div class="t" style="left:0;width:21px;top:15.5px;font-size:11px">3</div></div><div style="position:absolute;top:567px;height:46px;border:1px solid #4a4644;border-radius:4px;background:linear-gradient(#3a3a3a,#2c2c2c 14%,#2a2a2a 85%,#262626);color:#e8e8e8;text-align:center;left:447.0px;width:23px"><div class="a" style="left:2px;top:4px;width:17px;height:1.6px;background:#7cc832"></div><div class="t" style="left:0;width:21px;top:15.5px;font-size:11px">4</div></div><div style="position:absolute;top:567px;height:46px;border:1px solid #4a4644;border-radius:4px;background:linear-gradient(#3a3a3a,#2c2c2c 14%,#2a2a2a 85%,#262626);color:#e8e8e8;text-align:center;left:472.0px;width:23px"><div class="a" style="left:2px;top:4px;width:17px;height:1.6px;background:#f09030"></div><div class="t" style="left:0;width:21px;top:15.5px;font-size:11px">5</div></div><div style="position:absolute;top:567px;height:46px;border:1px solid #4a4644;border-radius:4px;background:linear-gradient(#3a3a3a,#2c2c2c 14%,#2a2a2a 85%,#262626);color:#e8e8e8;text-align:center;left:498.0px;width:23px"><div class="a" style="left:2px;top:4px;width:17px;height:1.6px;background:#2a2ad0"></div><div class="t" style="left:0;width:21px;top:15.5px;font-size:11px">6</div></div><div style="position:absolute;top:567px;height:46px;border:1px solid #4a4644;border-radius:4px;background:linear-gradient(#3a3a3a,#2c2c2c 14%,#2a2a2a 85%,#262626);color:#e8e8e8;text-align:center;left:523.0px;width:23px"><div class="a" style="left:2px;top:4px;width:17px;height:1.6px;background:#e040a0"></div><div class="t" style="left:0;width:21px;top:15.5px;font-size:11px">7</div></div><div style="position:absolute;top:567px;height:46px;border:1px solid #4a4644;border-radius:4px;background:linear-gradient(#3a3a3a,#2c2c2c 14%,#2a2a2a 85%,#262626);color:#e8e8e8;text-align:center;left:549.0px;width:23px"><div class="a" style="left:2px;top:4px;width:17px;height:1.6px;background:#18e090"></div><div class="t" style="left:0;width:21px;top:15.5px;font-size:11px">8</div></div><div class="a" style="left:577.5px;top:568px;width:1px;height:44px;background:#464646"></div><div class="a" style="left:663.8px;top:568px;width:1px;height:44px;background:#464646"></div><div class="a" style="left:726.5px;top:568px;width:1px;height:44px;background:#464646"></div><div style="position:absolute;top:567px;height:46px;border:1px solid #4a4644;border-radius:4px;background:linear-gradient(#3a3a3a,#2c2c2c 14%,#2a2a2a 85%,#262626);color:#e8e8e8;text-align:center;left:584.0px;width:22.5px"><div class="a" style="left:2px;top:4px;width:16.5px;height:1.6px;background:#e88a20"></div><div class="a" style="left:0;width:20.5px;top:9.5px;font-size:9px;line-height:9.1px;text-align:center">Add<br>New<br>Math</div></div><div style="position:absolute;top:567px;height:46px;border:1px solid #4a4644;border-radius:4px;background:linear-gradient(#3a3a3a,#2c2c2c 14%,#2a2a2a 85%,#262626);color:#e8e8e8;text-align:center;left:609.4px;width:22.5px"><div class="a" style="left:2px;top:4px;width:16.5px;height:1.6px;background:#d0d0d0"></div><div class="a" style="left:0;width:20.5px;top:9.5px;font-size:9px;line-height:9.1px;text-align:center">Add<br>New<br>Ref</div></div><div style="position:absolute;top:567px;height:46px;border:1px solid #4a4644;border-radius:4px;background:linear-gradient(#3a3a3a,#2c2c2c 14%,#2a2a2a 85%,#262626);color:#e8e8e8;text-align:center;left:634.8px;width:22.5px"><div class="a" style="left:2px;top:4px;width:16.5px;height:1.6px;background:#b040e0"></div><div class="a" style="left:0;width:20.5px;top:9.5px;font-size:9px;line-height:9.1px;text-align:center">Add<br>New<br>Bus</div></div><div style="position:absolute;top:567px;height:46px;border:1px solid #4a4644;border-radius:4px;background:linear-gradient(#3a3a3a,#2c2c2c 14%,#2a2a2a 85%,#262626);color:#e8e8e8;text-align:center;left:669.5px;width:22.5px"><div class="a" style="left:2px;top:4px;width:16.5px;height:1.2px;background:#555"></div><div class="t" style="left:0;width:20.5px;top:19px;font-size:8.8px;text-align:center">DVM</div></div><div style="position:absolute;top:567px;height:46px;border:1px solid #4a4644;border-radius:4px;background:linear-gradient(#3a3a3a,#2c2c2c 14%,#2a2a2a 85%,#262626);color:#e8e8e8;text-align:center;left:698.0px;width:22.5px"><div class="a" style="left:2px;top:4px;width:16.5px;height:1.2px;background:#555"></div><div class="t" style="left:0;width:20.5px;top:19px;font-size:8.8px;text-align:center">AFG</div></div><div class="a" style="left:732.0px;top:567px;width:111.0px;height:46px;border-radius:3px;overflow:hidden;background:#cacaca"><div class="a" style="left:0;top:0;width:100%;height:10.5px;background:#5a5a5a"></div><div class="t" style="left:3px;top:1.8px;font-size:9px;color:#e8e8e8">Horizontal</div><div class="t" style="left:4px;top:14.5px;font-size:8.6px;color:#181818;-webkit-text-stroke:0.2px #181818">400 ns/div</div><div class="t" style="left:64px;top:14.5px;font-size:8.8px;color:#181818;-webkit-text-stroke:0.2px #181818">4 µs</div><div class="t" style="left:4px;top:24.9px;font-size:8.6px;color:#181818;-webkit-text-stroke:0.2px #181818">SR: 250 MS/s</div><div class="t" style="left:64px;top:24.9px;font-size:8.8px;color:#181818;-webkit-text-stroke:0.2px #181818">4 ns/pt</div><div class="t" style="left:4px;top:35.3px;font-size:8.6px;color:#181818;-webkit-text-stroke:0.2px #181818">RL: 1 kpts</div><div class="t" style="left:75px;top:35.3px;font-size:8.8px;color:#181818;-webkit-text-stroke:0.2px #181818">50%</div><svg class="a" style="left:63px;top:35px" width="6" height="8"><path d="M0.5,0.5 h5 v5 l-2.5,2 l-2.5,-2 z" fill="#e07a20"/><rect x="2" y="1.5" width="2" height="3" fill="#222"/></svg></div><div class="a" style="left:848.5px;top:567px;width:90.5px;height:46px;border-radius:3px;overflow:hidden;background:#cacaca"><div class="a" style="left:0;top:0;width:100%;height:10.5px;background:#5a5a5a"></div><div class="t" style="left:3px;top:1.8px;font-size:9px;color:#e8e8e8">Trigger</div><div class="a" style="left:4px;top:14px;width:17px;height:9.5px;border-radius:3px;background:#f2f028;border:1px solid #555"></div><div class="t" style="left:10px;top:15px;font-size:9px;color:#111">1</div><svg class="a" style="left:27px;top:15px" width="10" height="8"><path d="M0.5,7.5 h2 l4.5,-6 h2.5" fill="none" stroke="#6a6a90" stroke-width="0.9"/></svg><div class="t" style="left:41.5px;top:14px;font-size:8.8px;color:#181818;-webkit-text-stroke:0.2px #181818">2.04 V</div></div><div class="a" style="left:945.0px;top:567px;width:85.0px;height:46px;border-radius:3px;overflow:hidden;background:#cacaca"><div class="a" style="left:0;top:0;width:100%;height:10.5px;background:#5a5a5a"></div><div class="t" style="left:3px;top:1.8px;font-size:9px;color:#e8e8e8">Acquisition</div><div class="t" style="left:4px;top:14.0px;font-size:8.6px;color:#181818;-webkit-text-stroke:0.2px #181818">Auto,</div><div class="t" style="left:4px;top:24.6px;font-size:8.6px;color:#181818;-webkit-text-stroke:0.2px #181818">High Res: 15 bits</div><div class="t" style="left:4px;top:35.2px;font-size:8.6px;color:#181818;-webkit-text-stroke:0.2px #181818">109.816 kAcqs</div><div class="t" style="left:38px;top:14px;font-size:8.6px;color:#181818;-webkit-text-stroke:0.2px #181818">Analyze</div></div><div class="a" style="left:1037.5px;top:568px;width:47px;height:20px;border-radius:4px;background:#14cc14;color:#f0fff0;font-weight:bold;font-size:7.3px;text-align:center;line-height:20px">Triggered</div><div class="a" style="left:0px;top:211px;width:227px;height:346px;background:#828282;opacity:0.95"><div class="a" style="left:0;top:0;width:227px;height:25px;background:#5f5f63"></div><div class="t" style="left:6.4px;top:8px;font-size:8.8px;color:#f0f0f0">CHANNEL 1</div><svg class="a" style="left:200px;top:4.5px" width="16" height="16"><circle cx="8" cy="7.5" r="6.6" fill="none" stroke="#e8e8e8" stroke-width="1.1"/><text x="8" y="11" font-size="9.5" fill="#e8e8e8" text-anchor="middle" font-family="Liberation Sans">?</text></svg><div style="position:absolute;left:0;width:227px;height:25px;background:linear-gradient(#c8c8c8,#c5c5c5 70%,#b5b5b5);border-bottom:1px solid #858585;top:25px;"><div class="t" style="left:7px;top:8px;font-size:7.4px;color:#101010;-webkit-text-stroke:0.22px #101010;letter-spacing:0">VERTICAL SETTINGS</div><svg class="a" style="left:209px;top:7.5px" width="9" height="11"><path d="M2.2,1.2 L6.4,5.2 L2.2,9.2" fill="none" stroke="#303030" stroke-width="1.9"/></svg></div><div style="position:absolute;left:0;width:227px;height:25px;background:linear-gradient(#c8c8c8,#c5c5c5 70%,#b5b5b5);border-bottom:1px solid #858585;top:50px;"><div class="t" style="left:7px;top:8px;font-size:7.4px;color:#101010;-webkit-text-stroke:0.22px #101010;letter-spacing:0">PROBE SETUP</div><svg class="a" style="left:209px;top:7.5px" width="9" height="11"><path d="M2.2,1.2 L6.4,5.2 L2.2,9.2" fill="none" stroke="#303030" stroke-width="1.9"/></svg></div><div style="position:absolute;left:0;width:227px;height:25px;background:linear-gradient(#c8c8c8,#c5c5c5 70%,#b5b5b5);border-bottom:1px solid #858585;top:75px;height:22px;border:0"><div class="t" style="left:7px;top:8px;font-size:7.4px;color:#101010;-webkit-text-stroke:0.22px #101010;letter-spacing:0">OTHER</div></div><div class="a" style="left:1px;top:65px;width:12px;height:50px;background:rgba(120,210,220,0.13)"></div><div class="a" style="left:13px;top:65px;width:15px;height:45px;background:rgba(230,220,200,0.10)"></div><div class="t" style="left:35px;top:83px;font-size:11px;color:rgba(255,255,255,0.12)">Clock</div><div class="t" style="left:7.5px;top:105px;font-size:8.8px;color:#181818;-webkit-text-stroke:0.2px #181818">Deskew</div><div class="a" style="left:8px;top:113.8px;width:67px;height:24px;border:2px solid #5cc0e0;border-radius:4px;background:#d2d2d2"></div><svg class="a" style="left:12px;top:120px" width="12" height="12"><circle cx="6" cy="6" r="5" fill="#3a8ad8"/><text x="6" y="9.3" font-size="8" font-weight="bold" fill="#fff" text-anchor="middle" font-family="Liberation Sans">A</text></svg><div class="a" style="left:50.3px;top:121px;width:20px;height:9px;background:#2c86d8"></div><div class="t" style="left:50.5px;top:121.3px;font-size:8.8px;color:#fff">-30 n</div><div style="position:absolute;border-radius:3px;background:linear-gradient(#d4d4d4,#bcbcbc);color:#181818;-webkit-text-stroke:0.2px #181818;text-align:center;display:flex;align-items:center;justify-content:center;line-height:9px;font-size:8.6px;left:83px;top:116.2px;width:24px;height:19.5px">Set<br>to 0</div><div style="position:absolute;border-radius:3px;background:linear-gradient(#d4d4d4,#bcbcbc);color:#181818;-webkit-text-stroke:0.2px #181818;text-align:center;display:flex;align-items:center;justify-content:center;line-height:9px;font-size:8.6px;left:117.5px;top:116.2px;width:66px;height:19.5px;padding-right:8px;font-size:9px">Multi-<br>Channel</div><svg class="a" style="left:174px;top:121px" width="8" height="8"><path d="M1.5,6.5 L6,2 M3.5,2 h2.7 v2.7" fill="none" stroke="#fff" stroke-width="1.1"/></svg><div class="t" style="left:7.5px;top:144px;font-size:9.3px;color:#181818;-webkit-text-stroke:0.2px #181818">External Attenuation</div><div style="position:absolute;border-radius:3px;background:linear-gradient(#d6d6d6,#cdcdcd);color:#181818;-webkit-text-stroke:0.2px #181818;font-size:8.8px;text-align:right;line-height:20px;padding-right:3px;left:9.8px;top:155px;width:63px;height:20px">1</div><div style="position:absolute;border-radius:3px;background:linear-gradient(#d6d6d6,#cdcdcd);color:#181818;-webkit-text-stroke:0.2px #181818;font-size:8.8px;text-align:right;line-height:20px;padding-right:3px;left:83px;top:155px;width:64px;height:20px">0</div><div style="position:absolute;border-radius:3px;background:linear-gradient(#d4d4d4,#bcbcbc);color:#181818;-webkit-text-stroke:0.2px #181818;text-align:center;display:flex;align-items:center;justify-content:center;line-height:9px;font-size:8.6px;left:157px;top:155px;width:32px;height:20px">Set to<br>Unity</div><div class="t" style="left:7.5px;top:183px;font-size:9.2px;color:#181818;-webkit-text-stroke:0.2px #181818">Alternate Units</div><div class="a" style="left:9.8px;top:194px;width:37px;height:20px;border-radius:3px;background:#a8a8a8"></div><div class="a" style="left:9.8px;top:194px;width:11.5px;height:20px;border-radius:3px;background:linear-gradient(#d2d2d2,#bcbcbc)"></div><div class="t" style="left:26.5px;top:199.5px;font-size:10px;color:#181818;-webkit-text-stroke:0.2px #181818">Off</div></div><svg class="a" style="left:15px;top:557px" width="24" height="10"><path d="M0.5,0 h23 l-10.5,8.6 q-1,0.9 -2,0 z" fill="#828282" opacity="0.95"/></svg></body></html>
